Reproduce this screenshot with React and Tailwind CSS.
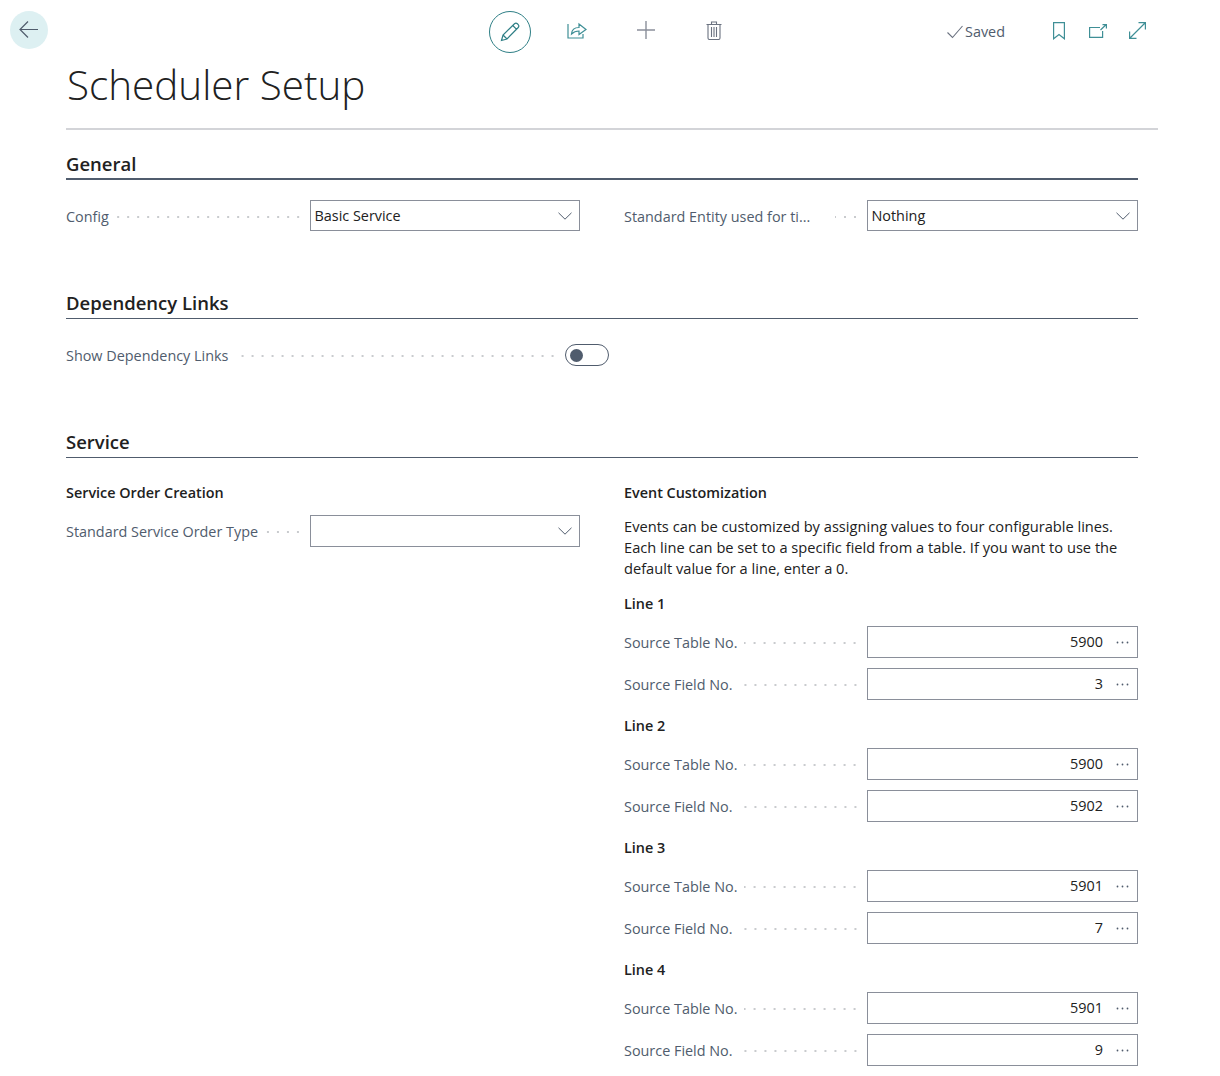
import React from "react";

const font = { fontFamily: '"Open Sans", "Noto Sans", sans-serif' };

function BackIcon() {
  return (
    <svg width="20" height="20" viewBox="0 0 20 20" fill="none" stroke="#505c6d" strokeWidth="1.2">
      <path d="M1 9.500h18M9 1.500 1 9.500l8 8" />
    </svg>
  );
}

function PencilIcon() {
  return (
    <svg width="20" height="20" viewBox="0 0 20 20" fill="none" stroke="#2f7f86" strokeWidth="1.2">
      <path d="M1.500 18.500 3 13 14.500 1.800c.9-.8 2-.8 2.900 0l.8.8c.8.9.8 2 0 2.900L7 17l-5.500 1.500ZM3 13l4 4M12.800 3.500l3.800 3.800" />
    </svg>
  );
}

function ShareIcon() {
  return (
    <svg width="20" height="18" viewBox="0 0 20 18" fill="none" stroke="#3f8f96" strokeWidth="1.2">
      <path d="M1 3v14h15v-4" />
      <path d="M4.500 13c.3-4 3-6.500 7.500-6.500V3l7 5.500-7 5v-3.500c-3 0-5.500 1-7.500 3Z" />
    </svg>
  );
}

function PlusIcon() {
  return (
    <svg width="20" height="20" viewBox="0 0 20 20" fill="none" stroke="#8a8f9a" strokeWidth="1.4">
      <path d="M10 1v18M1 10h18" />
    </svg>
  );
}

function TrashIcon() {
  return (
    <svg width="16" height="19" viewBox="0 0 16 19" fill="none" stroke="#6b7280" strokeWidth="1.1">
      <path d="M.5 3.500h15M2 3.500V17c0 .8.6 1.500 1.500 1.500h9c.9 0 1.500-.7 1.500-1.500V3.500M5.500 3.500V1h5v2.500" />
      <path d="M5.500 6v10M8 6v10M10.500 6v10" />
    </svg>
  );
}

function CheckIcon() {
  return (
    <svg width="16" height="14" viewBox="0 0 16 14" fill="none" stroke="#6b7280" strokeWidth="1.1">
      <path d="M.5 7.500 5.500 12.500 15.500 1" />
    </svg>
  );
}

function BookmarkIcon() {
  return (
    <svg width="12" height="18" viewBox="0 0 12 18" fill="none" stroke="#3f8f96" strokeWidth="1.2">
      <path d="M.6.600h10.800v16.200L6 12.500.6 16.800V.6Z" />
    </svg>
  );
}

function PopoutIcon() {
  return (
    <svg width="18" height="14" viewBox="0 0 18 14" fill="none" stroke="#3f8f96" strokeWidth="1.2">
      <path d="M11 3.500H.6v9.900h13V7" />
      <path d="M11.500 6 17 .8M13.500.6h3.900v3.900" />
    </svg>
  );
}

function ExpandIcon() {
  return (
    <svg width="17" height="17" viewBox="0 0 17 17" fill="none" stroke="#3f8f96" strokeWidth="1.2">
      <path d="M1 16 16 1M9.500.6h6.900v6.900M.6 9.500v6.900h6.900" />
    </svg>
  );
}

function Chevron() {
  return (
    <svg width="14" height="8" viewBox="0 0 14 8" fill="none" stroke="#505c6d" strokeWidth="1">
      <path d="M.5.800 7 7.200 13.500.8" />
    </svg>
  );
}

function MoreDots() {
  return (
    <svg className="ml-[13px]" width="13" height="3" viewBox="0 0 13 3" fill="#505c6d">
      <circle cx="1.500" cy="1.500" r="0.900" />
      <circle cx="6.500" cy="1.500" r="0.900" />
      <circle cx="11.500" cy="1.500" r="0.900" />
    </svg>
  );
}

function Dots() {
  return (
    <span className="flex-1 h-[2px] ml-[7px] mr-[7px] bg-right bg-[radial-gradient(circle,#c9cbce_1px,transparent_1px)] bg-[length:10px_2px]"></span>
  );
}

function Label({ text, truncated, width }) {
  return (
    <div className={"flex items-center shrink-0 pt-[2px] " + width}>
      <span className={"text-[14.4px] leading-[20px] text-[#505c6d] whitespace-nowrap " + (truncated ? "w-[204px]" : "")}>
        {text}
      </span>
      <Dots />
    </div>
  );
}

function SelectField({ label, value, truncated, height = "h-[31px]", width = "w-[244px]" }) {
  return (
    <div className="flex items-center">
      <Label text={label} truncated={truncated} width={width} />
      <div className={"flex-1 flex items-center justify-between border border-[#8a8f9a] pl-[3.500px] pr-[7px] " + height}>
        <span className="text-[14.4px] text-[#212121]">{value}</span>
        <Chevron />
      </div>
    </div>
  );
}

function NumberField({ label, value }) {
  return (
    <div className="flex items-center">
      <Label text={label} width="w-[243px]" />
      <div className="flex-1 h-[32px] flex items-center justify-end border border-[#8a8f9a] pr-[8px]">
        <span className="text-[14.4px] pb-[1px] text-[#212121]">{value}</span>
        <MoreDots />
      </div>
    </div>
  );
}

function Section({ title, thick, children }) {
  return (
    <section className="mr-[20px]">
      <h2 className={"text-[18.5px] leading-[24px] font-semibold text-[#212121] border-[#505c6d] " + (thick ? "pb-[2px] border-b-2" : "pb-[3px] border-b")}>
        {title}
      </h2>
      {children}
    </section>
  );
}

function LineGroup({ name, table, field }) {
  return (
    <div>
      <h4 className="text-[14.4px] leading-[20px] pt-[1px] font-semibold text-[#212121]">{name}</h4>
      <div className="mt-[12px] flex flex-col gap-[10px]">
        <NumberField label="Source Table No." value={table} />
        <NumberField label="Source Field No." value={field} />
      </div>
    </div>
  );
}

export default function App() {
  const lines = [
    { name: "Line 1", table: "5900", field: "3" },
    { name: "Line 2", table: "5900", field: "5902" },
    { name: "Line 3", table: "5901", field: "7" },
    { name: "Line 4", table: "5901", field: "9" },
  ];

  return (
    <div className="bg-white w-[1220px] h-[1076px] overflow-hidden" style={font}>
      <div className="flex items-center pl-[10px] pt-[11px]">
        <button className="w-[38px] h-[38px] mb-[4px] rounded-full bg-[#ddf0f2] flex items-center justify-center">
          <BackIcon />
        </button>
        <button className="ml-[441px] w-[42px] h-[42px] rounded-full border border-[#2f7f86] flex items-center justify-center">
          <PencilIcon />
        </button>
        <span className="ml-[34px] w-[24px] mb-[4px] flex justify-center"><ShareIcon /></span>
        <span className="ml-[45px] w-[24px] mb-[4px] flex justify-center"><PlusIcon /></span>
        <span className="ml-[44px] w-[24px] mb-[4px] flex justify-center"><TrashIcon /></span>
        <div className="ml-[221px] flex items-center gap-[2px] text-[14.4px] text-[#505c6d]">
          <CheckIcon />
          <span>Saved</span>
        </div>
        <span className="ml-[42px] w-[24px] mb-[2px] flex justify-center"><BookmarkIcon /></span>
        <span className="ml-[15px] w-[24px] mb-[2px] flex justify-center"><PopoutIcon /></span>
        <span className="ml-[16px] w-[24px] mb-[4px] flex justify-center"><ExpandIcon /></span>
      </div>

      <div className="ml-[66px] mr-[62px]">
        <h1 className="mt-[4px] pl-[1px] pb-[15px] text-[40.4px] leading-[56px] font-light text-[#212121] border-b-2 border-[#d3d4d8]">
          Scheduler Setup
        </h1>

        <div className="pt-[22px]">
          <Section title="General" thick>
            <div className="mt-[20px] grid grid-cols-2 gap-x-[44px]">
              <SelectField label="Config" value="Basic Service" />
              <SelectField label="Standard Entity used for ti..." value="Nothing" truncated width="w-[243px]" />
            </div>
          </Section>
        </div>

        <div className="mt-[60px]">
          <Section title="Dependency Links">
            <div className="mt-[25px] flex items-center w-[543px]">
              <div className="flex-1 flex items-center pt-[2px]">
                <span className="text-[14.4px] leading-[20px] text-[#505c6d] whitespace-nowrap">Show Dependency Links</span>
                <Dots />
              </div>
              <div className="w-[44px] h-[22px] rounded-full border border-[#505c6d] flex items-center pl-[4px]">
                <span className="w-[13px] h-[13px] rounded-full bg-[#505c6d]"></span>
              </div>
            </div>
          </Section>
        </div>

        <div className="mt-[64px]">
          <Section title="Service">
            <div className="mt-[24px] grid grid-cols-2 gap-x-[44px]">
              <div>
                <h3 className="text-[14.4px] leading-[20px] pt-[1px] font-semibold text-[#212121]">Service Order Creation</h3>
                <div className="mt-[12px]">
                  <SelectField label="Standard Service Order Type" value="" height="h-[32px]" />
                </div>
              </div>
              <div>
                <h3 className="text-[14.4px] leading-[20px] pt-[1px] font-semibold text-[#212121]">Event Customization</h3>
                <p className="mt-[13px] text-[14.65px] leading-[21px] text-[#212121]">
                  Events can be customized by assigning values to four configurable lines. Each line can be set to a specific field from a table. If you want to use the default value for a line, enter a 0.
                </p>
                <div className="mt-[14px] flex flex-col gap-[15px]">
                  {lines.map((el) => (
                    <LineGroup key={el.name} name={el.name} table={el.table} field={el.field} />
                  ))}
                </div>
              </div>
            </div>
          </Section>
        </div>
      </div>
    </div>
  );
}
